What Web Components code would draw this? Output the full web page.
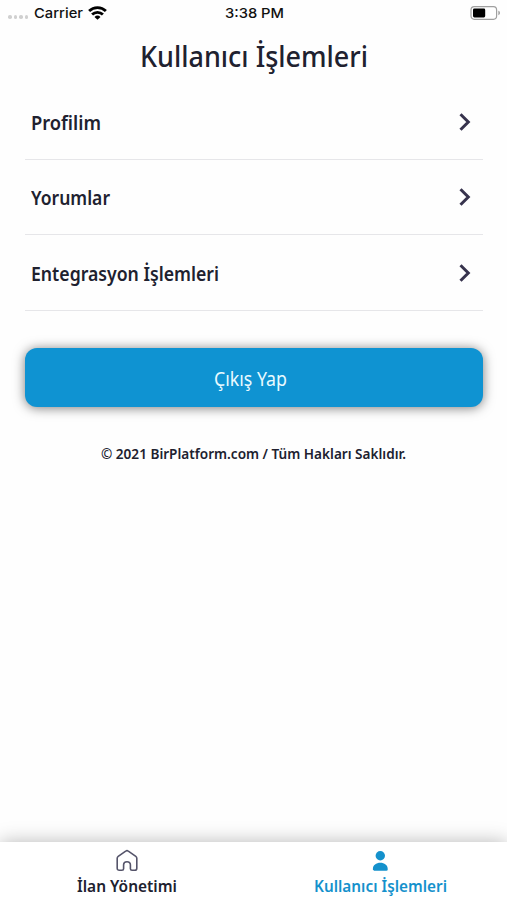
<!DOCTYPE html>
<html lang="tr">
<head>
<meta charset="utf-8">
<meta name="viewport" content="width=device-width, initial-scale=1">
<title>Kullanıcı İşlemleri</title>
<style>
  html, body {
    margin: 0;
    height: 100%;
    overflow: hidden;
    background: #fefefe;
  }
</style>
</head>
<body>
<account-screen></account-screen>

<script>
// Text set to a fixed measure: the glyphs are condensed to the given width.
class FitText extends HTMLElement {
  constructor() {
    super();
    this.attachShadow({ mode: 'open' });
    this.shadowRoot.innerHTML = `
      <style>
        :host { display: block; white-space: nowrap; }
        span { display: inline-block; transform-origin: 0 50%; }
      </style>
      <span><slot></slot></span>
    `;
  }

  connectedCallback() {
    const width = Number(this.getAttribute('width'));
    const span = this.shadowRoot.querySelector('span');
    this.style.width = `${width}px`;
    const fit = () => {
      span.style.transform = 'none';
      const natural = span.getBoundingClientRect().width;
      if (natural) span.style.transform = `scaleX(${width / natural})`;
    };
    fit();
    requestAnimationFrame(fit);
  }
}

class StatusBar extends HTMLElement {
  constructor() {
    super();
    this.attachShadow({ mode: 'open' });
    this.shadowRoot.innerHTML = `
      <style>
        :host {
          display: grid;
          grid-template-columns: 1fr auto 1fr;
          align-items: center;
          height: 26px;
          padding: 0 6px 0 8px;
          font: 500 13.5px/26px Inter, "Liberation Sans", sans-serif;
          color: #111;
        }
        .left { display: flex; align-items: center; }
        .dots { display: flex; gap: 2px; margin: 8px 5.6px 0 0; }
        .dots i { width: 3.6px; height: 3.6px; border-radius: 50%; background: #d0d0d0; }
        .wifi { margin-left: 5.5px; }
        .battery { justify-self: end; }
        svg { display: block; }
      </style>
      <div class="left">
        <div class="dots"><i></i><i></i><i></i><i></i></div>
        <fit-text width="49">Carrier</fit-text>
        <svg class="wifi" width="19" height="14" viewBox="0 0 19 14">
          <g fill="none" stroke="#000" stroke-width="2.8">
            <path d="M1.1 5.1a12 12 0 0 1 16.8 0"/>
            <path d="M4.1 8.5a7.7 7.7 0 0 1 10.8 0"/>
          </g>
          <path d="M9.5 13.7 6.5 10.9a4.3 4.3 0 0 1 6 0z"/>
        </svg>
      </div>
      <fit-text width="59">3:38 PM</fit-text>
      <svg class="battery" width="31" height="14" viewBox="0 0 31 14">
        <rect x="1" y=".7" width="25.6" height="12.6" rx="3.2" fill="#fff" stroke="#a0a0a0" stroke-width="1.2"/>
        <rect x="3" y="2.6" width="12.2" height="8.8" rx="1.4"/>
        <path d="M28.4 4.8c2 .6 2 3.8 0 4.4z" fill="#999"/>
      </svg>
    `;
  }
}

class MenuRow extends HTMLElement {
  constructor() {
    super();
    this.attachShadow({ mode: 'open' });
    this.shadowRoot.innerHTML = `
      <style>
        :host {
          display: flex;
          align-items: center;
          justify-content: space-between;
          box-sizing: border-box;
          height: 75.6px;
          padding: 1px 12px 0 6px;
          border-bottom: 1.5px solid #e6e6e9;
          font-weight: 600;
          font-size: 19.8px;
          line-height: 28px;
        }
        .label { padding-top: 2px; }
        svg { display: block; }
      </style>
      <div class="label"><slot></slot></div>
      <svg width="12" height="18" viewBox="0 0 12 18" fill="none" stroke="#37334d" stroke-width="3">
        <path d="M1.5 1.2 9.3 9 1.5 16.8"/>
      </svg>
    `;
  }
}

class ActionButton extends HTMLElement {
  constructor() {
    super();
    this.attachShadow({ mode: 'open' });
    this.shadowRoot.innerHTML = `
      <style>
        :host { display: block; }
        button {
          display: flex;
          align-items: center;
          justify-content: center;
          width: 100%;
          height: 59px;
          padding: 3px 7px 0 0;
          border: 0;
          border-radius: 12px;
          background: #0f93d2;
          box-shadow: 0 1px 12px rgba(0, 0, 0, .52);
          color: #e9faff;
          font: inherit;
          font-size: 20px;
          line-height: 28px;
        }
      </style>
      <button><slot></slot></button>
    `;
  }
}

class TabItem extends HTMLElement {
  constructor() {
    super();
    this.attachShadow({ mode: 'open' });
    this.shadowRoot.innerHTML = `
      <style>
        :host {
          display: flex;
          flex: 1;
          flex-direction: column;
          align-items: center;
          padding-top: 7px;
          font-weight: 600;
          font-size: 16.8px;
          line-height: 24px;
        }
        :host([active]) { color: #1491cc; }
        .icon { height: 25px; }
      </style>
      <div class="icon"><slot name="icon"></slot></div>
      <slot></slot>
    `;
  }
}

class TabBar extends HTMLElement {
  constructor() {
    super();
    this.attachShadow({ mode: 'open' });
    this.shadowRoot.innerHTML = `
      <style>
        :host {
          display: flex;
          height: 58px;
          background: #fff;
          box-shadow: 0 0 18px rgba(0, 0, 0, .28);
        }
      </style>
      <slot></slot>
    `;
  }
}

class AccountScreen extends HTMLElement {
  constructor() {
    super();
    this.attachShadow({ mode: 'open' });
    this.shadowRoot.innerHTML = `
      <style>
        :host {
          display: flex;
          flex-direction: column;
          height: 100vh;
          color: #20212f;
          font-family: "Noto Sans", "Open Sans", sans-serif;
        }
        main {
          flex: 1;
          display: flex;
          flex-direction: column;
          padding: 0 24.5px 0 25px;
        }
        h1 {
          display: flex;
          justify-content: center;
          margin: 0;
          padding-top: 9px;
          height: 49px;
          font-size: 28.8px;
          font-weight: 530;
          line-height: 42px;
        }
        action-button { margin-top: 37.2px; }
        footer {
          display: flex;
          justify-content: center;
          margin-top: 35px;
          font-size: 14.6px;
          font-weight: 600;
          line-height: 22px;
        }
        svg { display: block; }
      </style>
      <status-bar></status-bar>
      <main>
        <h1><fit-text width="228">Kullanıcı İşlemleri</fit-text></h1>
        <nav>
          <menu-row><fit-text width="70">Profilim</fit-text></menu-row>
          <menu-row><fit-text width="79">Yorumlar</fit-text></menu-row>
          <menu-row><fit-text width="188">Entegrasyon İşlemleri</fit-text></menu-row>
        </nav>
        <action-button><fit-text width="73">Çıkış Yap</fit-text></action-button>
        <footer><fit-text width="305">© 2021 BirPlatform.com / Tüm Hakları Saklıdır.</fit-text></footer>
      </main>
      <tab-bar>
        <tab-item>
          <svg slot="icon" width="24" height="24" viewBox="0 0 24 24" fill="none" stroke="#55546a" stroke-width="1.6" stroke-linejoin="round">
            <path d="M2.2 9.3c0-.9.3-1.5 1-2l7.5-5.2c.8-.6 1.8-.6 2.6 0l7.5 5.2c.7.5 1 1.1 1 2v9.9c0 1.3-.8 2.1-2.1 2.1h-2.7c-1 0-1.6-.6-1.6-1.6v-3.9c0-1.8-1.2-3-3.4-3s-3.4 1.2-3.4 3v3.9c0 1-.6 1.6-1.6 1.6H4.3c-1.3 0-2.1-.8-2.1-2.1z"/>
          </svg>
          <fit-text width="100">İlan Yönetimi</fit-text>
        </tab-item>
        <tab-item active>
          <svg slot="icon" width="24" height="24" viewBox="0 0 24 24" fill="#1491cc">
            <circle cx="12.3" cy="6.7" r="4.7"/>
            <path d="M4.9 20.6v-.9c0-3.5 3.3-6 7.4-6s7.4 2.5 7.4 6v.9c0 .8-.4 1.2-1.2 1.2H6.1c-.8 0-1.2-.4-1.2-1.2z"/>
          </svg>
          <fit-text width="133">Kullanıcı İşlemleri</fit-text>
        </tab-item>
      </tab-bar>
    `;
  }
}

customElements.define('fit-text', FitText);
customElements.define('status-bar', StatusBar);
customElements.define('menu-row', MenuRow);
customElements.define('action-button', ActionButton);
customElements.define('tab-item', TabItem);
customElements.define('tab-bar', TabBar);
customElements.define('account-screen', AccountScreen);
</script>
</body>
</html>
